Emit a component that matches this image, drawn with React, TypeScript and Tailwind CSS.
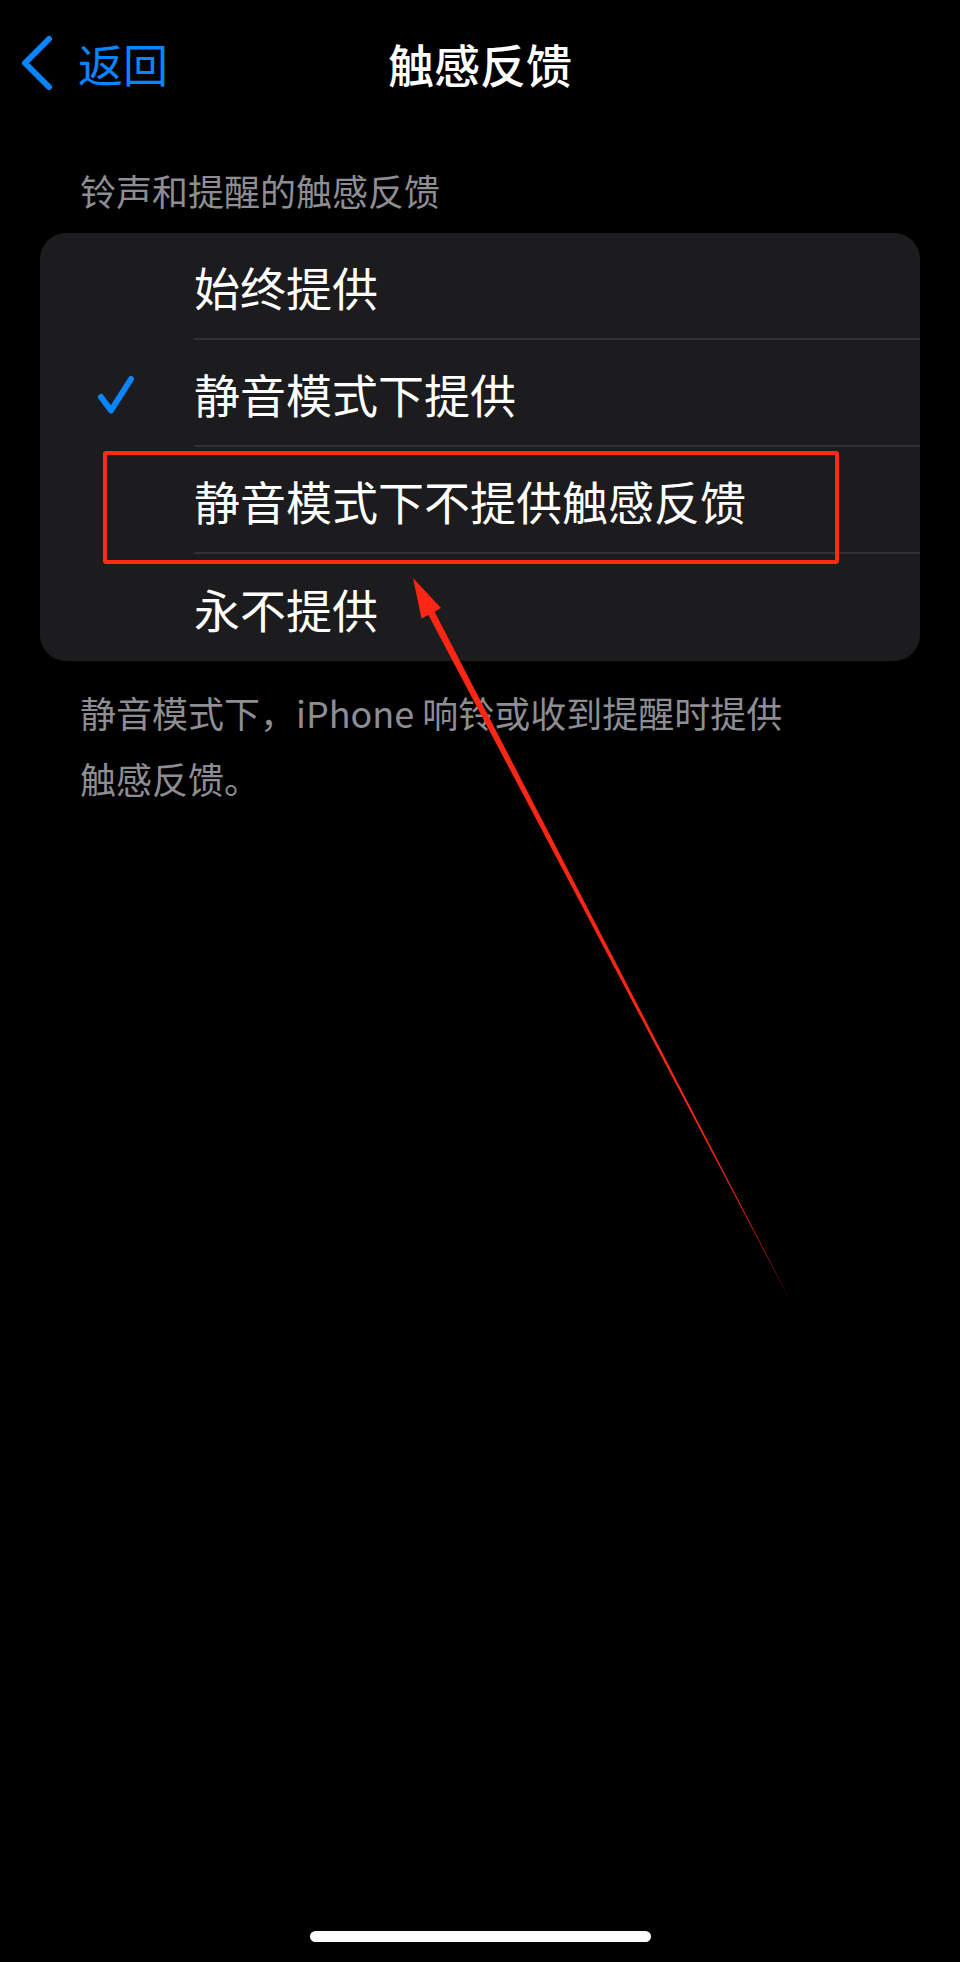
import React from 'react';

const options = ['始终提供', '静音模式下提供', '静音模式下不提供触感反馈', '永不提供'];
const selected = 1;

const Chevron = () => (
  <svg width="34" height="54" viewBox="0 0 34 54" fill="none">
    <path d="M29 3 L5 27 L29 51" stroke="#0a84ff" strokeWidth="6" strokeLinecap="round" strokeLinejoin="round" />
  </svg>
);

const Check = () => (
  <svg width="44" height="40" viewBox="0 0 44 40" fill="none">
    <path d="M7 23 L17 36.5 L37 5" stroke="#0a84ff" strokeWidth="6" strokeLinecap="round" strokeLinejoin="round" />
  </svg>
);

const App = () => {
  return (
    <div
      className="relative flex flex-col w-[960px] h-[1962px] bg-black overflow-hidden"
      style={{ fontFamily: '"Noto Sans CJK SC", "Noto Sans", sans-serif' }}
    >
      {/* Nav bar */}
      <div className="grid grid-cols-[1fr_auto_1fr] items-center h-[126px]">
        <div className="flex items-center gap-[24px] pl-[20px]">
          <Chevron />
          <span className="text-[45px] leading-none text-[#0a84ff]">返回</span>
        </div>
        <span className="text-[46px] leading-none font-medium text-white">触感反馈</span>
        <div />
      </div>

      {/* Section header */}
      <div className="pt-[44px] pl-[80px] text-[36px] leading-[40px] text-[#8d8d93]">
        铃声和提醒的触感反馈
      </div>

      {/* Options */}
      <div className="mt-[23px] mx-[40px] rounded-[26px] bg-[#1c1c1e] overflow-hidden">
        {options.map((label, i) => (
          <div key={label} className="flex h-[107px]">
            <div className="w-[154px] flex items-center justify-end pr-[56px]">
              {i === selected && <Check />}
            </div>
            <div
              className={
                'flex-1 flex items-center text-[46px] leading-none text-white ' +
                (i < options.length - 1 ? 'border-b-[2px] border-[#323234]' : '')
              }
            >
              {label}
            </div>
          </div>
        ))}
      </div>

      {/* Footer note */}
      <div className="mt-[18px] pl-[80px] text-[36px] leading-[66px] text-[#8d8d93]">
        <div>静音模式下，iPhone 响铃或收到提醒时提供</div>
        <div>触感反馈。</div>
      </div>

      {/* Home indicator */}
      <div className="mt-auto pb-[20px] flex justify-center">
        <div className="w-[341px] h-[11px] rounded-full bg-white" />
      </div>

      {/* Annotation box */}
      <div className="absolute left-[103px] top-[451px] w-[736px] h-[113px] border-[4px] border-[#ff2a1a] rounded-[3px]" />

      {/* Annotation arrow */}
      <svg className="absolute left-0 top-0 pointer-events-none" width="960" height="1962" viewBox="0 0 960 1962">
        <polygon
          points="413,578 441,608 434.6,611.8 791,1302 428.4,615 421.5,618.5"
          fill="#ff2616"
        />
      </svg>
    </div>
  );
};

export default App;
